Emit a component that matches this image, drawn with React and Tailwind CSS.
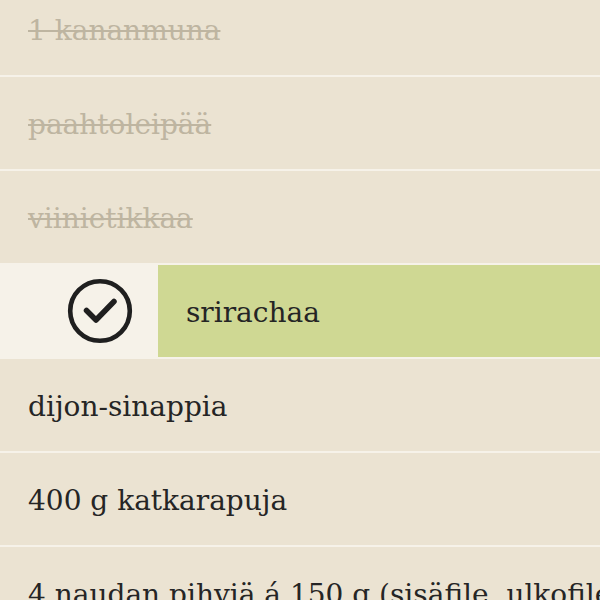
import React from 'react';

const items = [
  { id: 1, name: '1 kananmuna', done: true },
  { id: 2, name: 'paahtoleipää', done: true },
  { id: 3, name: 'viinietikkaa', done: true },
  { id: 4, name: 'srirachaa', active: true },
  { id: 5, name: 'dijon-sinappia' },
  { id: 6, name: '400 g katkarapuja' },
  { id: 7, name: '4 naudan pihviä á 150 g (sisäfile, ulkofile tai entrecote)' },
];

const CheckIcon = () => (
  <svg width="68" height="68" viewBox="0 0 68 68" fill="none">
    <circle cx="34" cy="34" r="29.8" stroke="#1f1f1f" strokeWidth="4.6" />
    <path d="M20.5 33.5 L30 43 L48 24.5" stroke="#1f1f1f" strokeWidth="5.5" strokeLinecap="round" strokeLinejoin="round" />
  </svg>
);

const App = () => {
  return (
    <div className="w-[600px] h-[600px] overflow-hidden bg-[#ebe3d2]" style={{ fontFamily: '"DejaVu Serif", serif' }}>
      <ul className="-mt-[17px]">
        {items.map((item) => (
          <li key={item.id} className="h-[94px] border-b-2 border-[#f6f2e9] flex overflow-hidden">
            {item.active ? (
              <>
                <div className="w-[158px] shrink-0 bg-[#f6f2e9] flex items-center justify-end pr-[24px]">
                  <CheckIcon />
                </div>
                <div className="flex-1 bg-[#cfd893] flex items-center pl-[28px] pt-[3px] text-[28px] text-[#252525] whitespace-nowrap">
                  {item.name}
                </div>
              </>
            ) : (
              <div
                className={`flex items-center pl-[28px] pt-[3px] text-[28px] whitespace-nowrap ${
                  item.done ? 'text-[#beb5a1] line-through decoration-2' : 'text-[#252525]'
                }`}
              >
                {item.name}
              </div>
            )}
          </li>
        ))}
      </ul>
    </div>
  );
};

export default App;
